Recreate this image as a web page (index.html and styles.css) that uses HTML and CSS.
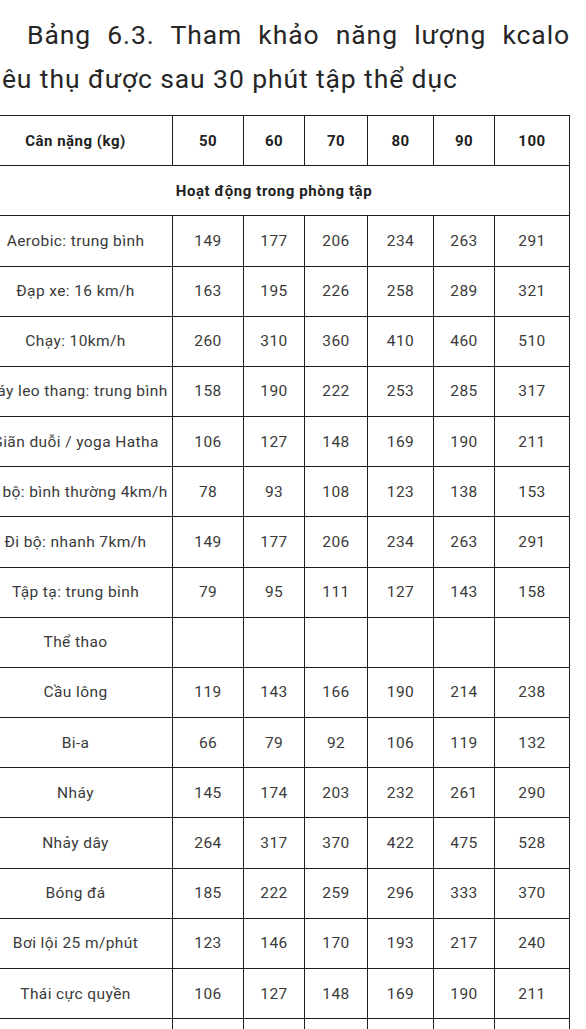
FILE: index.html
```html
<!DOCTYPE html>
<html lang="vi">
<head>
<meta charset="utf-8">
<title>Bảng 6.3</title>
<link rel="stylesheet" href="styles.css">
</head>
<body>
<div class="page">
  <p class="title"><span class="line1">Bảng 6.3. Tham khảo năng lượng kcalo</span> <span class="line2">tiêu thụ được sau 30 phút tập thể dục</span></p>
  <table class="kcal">
    <colgroup>
      <col class="c-name"><col class="c50"><col class="c60"><col class="c70"><col class="c80"><col class="c90"><col class="c100">
    </colgroup>
    <thead>
      <tr class="head"><th>Cân nặng (kg)</th><th>50</th><th>60</th><th>70</th><th>80</th><th>90</th><th>100</th></tr>
    </thead>
    <tbody>
      <tr class="section"><th colspan="7">Hoạt động trong phòng tập</th></tr>
      <tr><td>Aerobic: trung bình</td><td>149</td><td>177</td><td>206</td><td>234</td><td>263</td><td>291</td></tr>
      <tr><td>Đạp xe: 16 km/h</td><td>163</td><td>195</td><td>226</td><td>258</td><td>289</td><td>321</td></tr>
      <tr><td>Chạy: 10km/h</td><td>260</td><td>310</td><td>360</td><td>410</td><td>460</td><td>510</td></tr>
      <tr><td>Máy leo thang: trung bình</td><td>158</td><td>190</td><td>222</td><td>253</td><td>285</td><td>317</td></tr>
      <tr><td>Giãn duỗi / yoga Hatha</td><td>106</td><td>127</td><td>148</td><td>169</td><td>190</td><td>211</td></tr>
      <tr><td>Đi bộ: bình thường 4km/h</td><td>78</td><td>93</td><td>108</td><td>123</td><td>138</td><td>153</td></tr>
      <tr><td>Đi bộ: nhanh 7km/h</td><td>149</td><td>177</td><td>206</td><td>234</td><td>263</td><td>291</td></tr>
      <tr><td>Tập tạ: trung binh</td><td>79</td><td>95</td><td>111</td><td>127</td><td>143</td><td>158</td></tr>
      <tr><td>Thể thao</td><td></td><td></td><td></td><td></td><td></td><td></td></tr>
      <tr><td>Cầu lông</td><td>119</td><td>143</td><td>166</td><td>190</td><td>214</td><td>238</td></tr>
      <tr><td>Bi-a</td><td>66</td><td>79</td><td>92</td><td>106</td><td>119</td><td>132</td></tr>
      <tr><td>Nháy</td><td>145</td><td>174</td><td>203</td><td>232</td><td>261</td><td>290</td></tr>
      <tr><td>Nhảy dây</td><td>264</td><td>317</td><td>370</td><td>422</td><td>475</td><td>528</td></tr>
      <tr><td>Bóng đá</td><td>185</td><td>222</td><td>259</td><td>296</td><td>333</td><td>370</td></tr>
      <tr><td>Bơi lội 25 m/phút</td><td>123</td><td>146</td><td>170</td><td>193</td><td>217</td><td>240</td></tr>
      <tr><td>Thái cực quyền</td><td>106</td><td>127</td><td>148</td><td>169</td><td>190</td><td>211</td></tr>
      <tr><td></td><td></td><td></td><td></td><td></td><td></td><td></td></tr>
    </tbody>
  </table>
</div>
</body>
</html>
```

FILE: styles.css
```css
html, body {
  margin: 0;
  padding: 0;
  background: #ffffff;
  overflow: hidden;
}

.page {
  width: 591px;
  margin-left: -22px;
  font-family: Roboto, "Liberation Sans", sans-serif;
}

.title {
  margin: 13px 0 14px 6px;
  width: 586px;
  font-size: 26.5px;
  line-height: 44px;
  letter-spacing: 0.9px;
  color: #262626;
}

.title .line1 {
  display: block;
  padding-left: 43px;
  text-align: justify;
  text-align-last: justify;
}

.title .line2 {
  display: block;
  margin-left: 1px;
}

.kcal {
  border-collapse: collapse;
  table-layout: fixed;
  width: 591px;
  color: #3a3a3a;
  font-size: 15.5px;
  letter-spacing: 0.4px;
}

.c-name { width: 194px; }
.c50 { width: 71px; }
.c60 { width: 61px; }
.c70 { width: 63px; }
.c80 { width: 66px; }
.c90 { width: 61px; }
.c100 { width: 75px; }

.kcal th,
.kcal td {
  border: 1px solid #1e1e1e;
  height: 49.18px;
  padding: 0;
  text-align: center;
  vertical-align: middle;
  white-space: nowrap;
  overflow: visible;
}

.kcal th {
  font-weight: 700;
  font-size: 15px;
  letter-spacing: 0.5px;
  color: #222;
}

.kcal .section th {
  font-size: 15px;
  letter-spacing: 0.6px;
}
```
